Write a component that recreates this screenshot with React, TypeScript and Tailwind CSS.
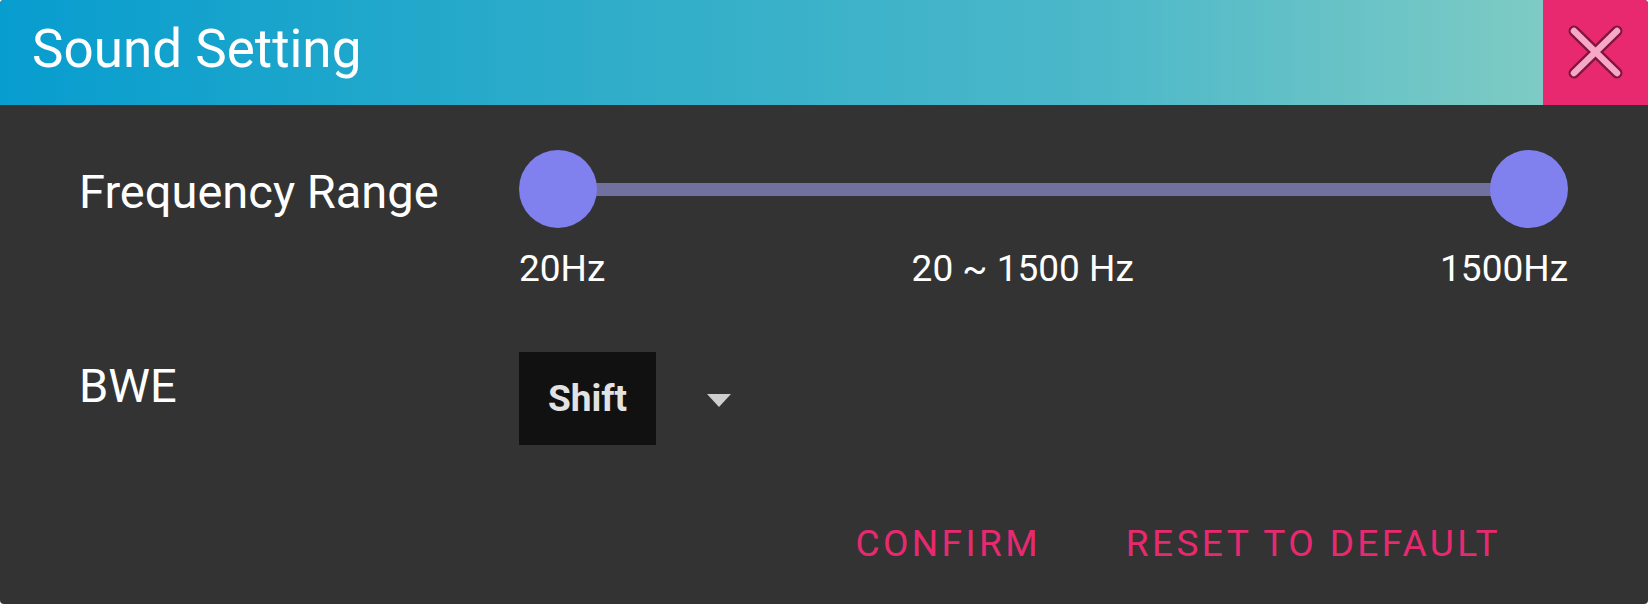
import React from "react";

const font = { fontFamily: "Roboto, 'Noto Sans', sans-serif" };

const CloseIcon = () => (
    <svg width="105" height="105" viewBox="0 0 105 105">
        <g strokeLinecap="round" fill="none">
            <path d="M31 31 L74 73 M74 31 L31 73" stroke="#5c0f2e" strokeOpacity="0.75" strokeWidth="11" />
            <path d="M31 31 L74 73 M74 31 L31 73" stroke="#f6a8c6" strokeWidth="6.5" />
        </g>
    </svg>
);

const RangeSlider = () => {
    return (
        <div className="relative w-[1049px] h-[78px]">
            <div className="absolute left-[39px] right-[39px] top-[33px] h-[13px] bg-[#7171a0]" />
            <div className="absolute left-0 top-0 w-[78px] h-[78px] rounded-full bg-[#8080ee]" />
            <div className="absolute right-0 top-0 w-[78px] h-[78px] rounded-full bg-[#8080ee]" />
        </div>
    );
};

const App = () => {
    return (
        <div
            style={font}
            className="w-[1648px] h-[604px] bg-[#333333] rounded-[4px] overflow-hidden flex flex-col text-white"
        >
            <div className="flex h-[105px] shrink-0">
                <div className="flex-1 flex items-center pl-[32px] pb-[6px] bg-[linear-gradient(90deg,#079dcf_0%,#2fadc9_39%,#4cb8c9_71%,#7ecbc4_100%)]">
                    <span className="text-[53px] leading-none">Sound Setting</span>
                </div>
                <button className="w-[105px] h-[105px] bg-[#e9296f] flex items-center justify-center">
                    <CloseIcon />
                </button>
            </div>

            <div className="flex flex-col pl-[79px] pr-[80px] pt-[45px]">
                <div className="flex items-center">
                    <div className="w-[440px] text-[47px] leading-none mt-[4px]">Frequency Range</div>
                    <RangeSlider />
                </div>

                <div className="ml-[440px] mt-[22px] flex justify-between text-[37px] leading-none">
                    <span>20Hz</span>
                    <span>20 ~ 1500 Hz</span>
                    <span>1500Hz</span>
                </div>

                <div className="flex mt-[65px]">
                    <div className="w-[440px] text-[47px] leading-none pt-[10px]">BWE</div>
                    <div className="flex items-center">
                        <div className="w-[137px] h-[93px] bg-[#111111] flex items-center justify-center text-[37px] font-bold text-[#e2e2e2]">
                            Shift
                        </div>
                        <div className="ml-[51px] mt-[4px] w-0 h-0 border-l-[12.5px] border-r-[12.5px] border-t-[13px] border-l-transparent border-r-transparent border-t-[#cfcfcf]" />
                    </div>
                </div>

                <div className="flex justify-end mt-[80px] pr-[67px] gap-[85px] text-[37px] leading-none font-normal tracking-[3.4px] text-[#e9296f]">
                    <button>CONFIRM</button>
                    <button>RESET TO DEFAULT</button>
                </div>
            </div>
        </div>
    );
};

export default App;
